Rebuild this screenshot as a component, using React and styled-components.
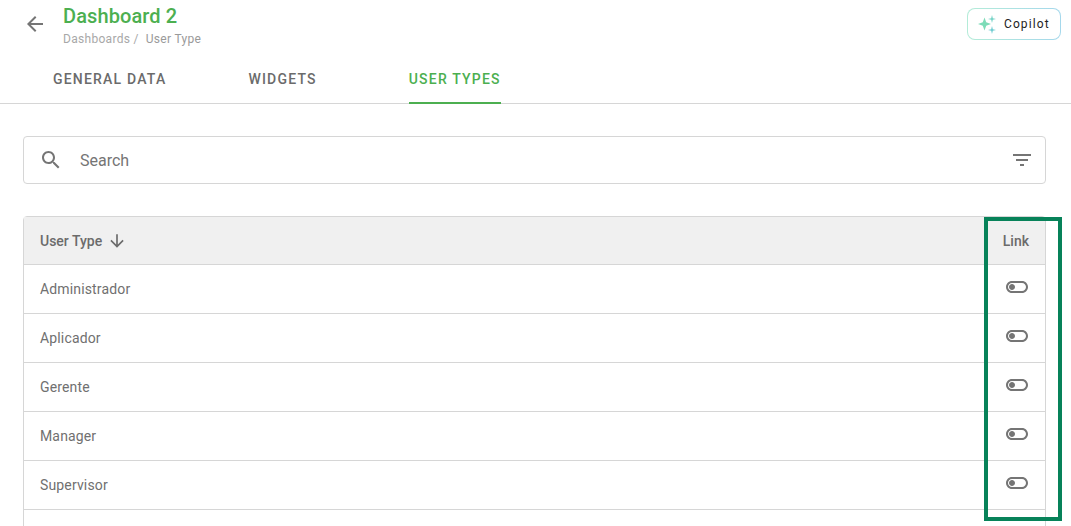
import React from "react";
import styled, { createGlobalStyle } from "styled-components";

const GlobalStyle = createGlobalStyle`
  html, body {
    margin: 0;
    padding: 0;
    height: 100%;
    overflow: hidden;
    background: #fff;
    font-family: Roboto, "Liberation Sans", sans-serif;
  }
  * { box-sizing: border-box; }
`;

const Page = styled.div`
  position: relative;
  width: 1071px;
  height: 526px;
  overflow: hidden;
`;

const Header = styled.header`
  display: flex;
  align-items: flex-start;
  justify-content: space-between;
  height: 54px;
  padding: 0 10px 0 23px;
`;

const TitleGroup = styled.div`
  display: flex;
  align-items: flex-start;
`;

const BackButton = styled.button`
  display: flex;
  width: 24px;
  height: 24px;
  margin-top: 12px;
  padding: 0;
  border: none;
  background: none;
  color: #757575;
`;

const TitleText = styled.div`
  margin-left: 16px;
  padding-top: 4px;
`;

const Title = styled.h1`
  margin: 0;
  font-size: 20px;
  line-height: 24px;
  font-weight: 500;
  letter-spacing: 0.1px;
  color: #4caf50;
`;

const Breadcrumb = styled.div`
  display: flex;
  gap: 7px;
  margin-top: 3px;
  font-size: 12px;
  line-height: 16px;
  letter-spacing: 0.3px;
  color: #a8a8a8;

  strong {
    font-weight: 400;
    color: #9a9a9a;
  }
`;

const CopilotButton = styled.button`
  display: flex;
  align-items: center;
  gap: 7px;
  width: 94px;
  height: 32px;
  margin-top: 8px;
  padding: 0 0 0 9px;
  border: 1px solid transparent;
  border-radius: 8px;
  background:
    linear-gradient(#fff, #fff) padding-box,
    linear-gradient(90deg, #b4ecd8, #a5d8ec) border-box;
  font-family: inherit;
  font-size: 12px;
  font-weight: 400;
  letter-spacing: 1.1px;
  color: #222;
`;

const Tabs = styled.nav`
  display: flex;
  height: 50px;
  padding-left: 30px;
  border-bottom: 1px solid #d6d6d6;
`;

const Tab = styled.div`
  height: 50px;
  margin-right: ${props => props.$gap}px;
  padding: 0 ${props => props.$pad}px;
  font-size: 14px;
  font-weight: 500;
  line-height: 50px;
  letter-spacing: 1.2px;
  white-space: nowrap;
  color: ${props => (props.$active ? "#4caf50" : "#6b6b6b")};
  border-bottom: 2px solid ${props => (props.$active ? "#4caf50" : "transparent")};
`;

const Content = styled.main`
  padding: 32px 25px 0 23px;
`;

const SearchBar = styled.div`
  display: flex;
  align-items: center;
  height: 48px;
  padding: 0 11px 0 15px;
  border: 1px solid #d6d6d6;
  border-radius: 4px;
  color: #757575;
`;

const SearchText = styled.span`
  flex: 1;
  margin-left: 17px;
  font-size: 16px;
  color: #757575;
`;

const Table = styled.div`
  margin-top: 32px;
  border: 1px solid #d6d6d6;
  border-radius: 4px 4px 0 0;
`;

const Row = styled.div`
  display: flex;
  align-items: center;
  justify-content: space-between;
  height: 49px;
  padding: 0 16px;
  font-size: 14px;
  letter-spacing: 0.15px;
  color: #707070;
  border-bottom: 1px solid #d6d6d6;

  &:last-child {
    border-bottom: none;
  }
`;

const HeadRow = styled(Row)`
  height: 48px;
  font-weight: 500;
  letter-spacing: 0;
  color: #6b6b6b;
  background: #f0f0f0;
`;

const SortLabel = styled.div`
  display: flex;
  align-items: center;
  gap: 5px;
`;

const ToggleIcon = styled.svg`
  display: block;
  width: 24px;
  height: 24px;
  margin-bottom: 4px;
  fill: #757575;
`;

const Highlight = styled.div`
  position: absolute;
  left: 984px;
  top: 217px;
  width: 78px;
  height: 304px;
  border: 4px solid #078259;
`;

const Icon = ({ d, size = 24 }) => (
  <svg width={size} height={size} viewBox="0 0 24 24" fill="currentColor">
    <path d={d} />
  </svg>
);

const icons = {
  back: "M20 11H7.83l5.59-5.59L12 4l-8 8 8 8 1.41-1.41L7.83 13H20v-2z",
  search:
    "M15.5 14h-.79l-.28-.27C15.41 12.59 16 11.11 16 9.5 16 5.91 13.09 3 9.5 3S3 5.91 3 9.5 5.91 16 9.5 16c1.61 0 3.09-.59 4.23-1.57l.27.28v.79l5 4.99L20.49 19l-4.99-5zm-6 0C7.01 14 5 11.99 5 9.5S7.01 5 9.5 5 14 7.01 14 9.5 11.99 14 9.5 14z",
  filter: "M10 18h4v-2h-4v2zM3 6v2h18V6H3zm3 7h12v-2H6v2z",
  down: "M20 12l-1.41-1.41L13 16.17V4h-2v12.17l-5.58-5.59L4 12l8 8 8-8z",
  toggle:
    "M17 6H7c-3.31 0-6 2.69-6 6s2.69 6 6 6h10c3.31 0 6-2.69 6-6s-2.69-6-6-6zm0 10H7c-2.21 0-4-1.79-4-4s1.79-4 4-4h10c2.21 0 4 1.79 4 4s-1.79 4-4 4zM7 9c-1.66 0-3 1.34-3 3s1.34 3 3 3 3-1.34 3-3-1.34-3-3-3z",
};

const Sparkles = () => (
  <svg width="20" height="20" viewBox="0 0 20 20">
    <path d="M7.5 3.5 L9.2 8.3 L14 10 L9.2 11.7 L7.5 16.5 L5.8 11.7 L1 10 L5.8 8.3 Z" fill="#7ddcb8" />
    <path d="M15 1 L15.8 4.2 L19 5 L15.8 5.8 L15 9 L14.2 5.8 L11 5 L14.2 4.2 Z" fill="#74d3c6" />
    <path d="M15 12 L15.8 15.2 L19 16 L15.8 16.8 L15 20 L14.2 16.8 L11 16 L14.2 15.2 Z" fill="#6ccbd0" />
  </svg>
);

const userTypes = ["Administrador", "Aplicador", "Gerente", "Manager", "Supervisor", ""];

function App() {
  return (
    <Page>
      <GlobalStyle />
      <Header>
        <TitleGroup>
          <BackButton>
            <Icon d={icons.back} />
          </BackButton>
          <TitleText>
            <Title>Dashboard 2</Title>
            <Breadcrumb>
              <span>Dashboards /</span>
              <strong>User Type</strong>
            </Breadcrumb>
          </TitleText>
        </TitleGroup>
        <CopilotButton>
          <Sparkles />
          Copilot
        </CopilotButton>
      </Header>
      <Tabs>
        <Tab $pad={23} $gap={36}>GENERAL DATA</Tab>
        <Tab $pad={23} $gap={69}>WIDGETS</Tab>
        <Tab $active $pad={0} $gap={0}>USER TYPES</Tab>
      </Tabs>
      <Content>
        <SearchBar>
          <Icon d={icons.search} />
          <SearchText>Search</SearchText>
          <Icon d={icons.filter} />
        </SearchBar>
        <Table>
          <HeadRow>
            <SortLabel>
              User Type
              <Icon d={icons.down} size={20} />
            </SortLabel>
            <span>Link</span>
          </HeadRow>
          {userTypes.map(name => (
            <Row key={name}>
              {name}
              {name && (
                <ToggleIcon viewBox="0 0 24 24">
                  <path d={icons.toggle} />
                </ToggleIcon>
              )}
            </Row>
          ))}
        </Table>
      </Content>
      <Highlight />
    </Page>
  );
}

export default App;
